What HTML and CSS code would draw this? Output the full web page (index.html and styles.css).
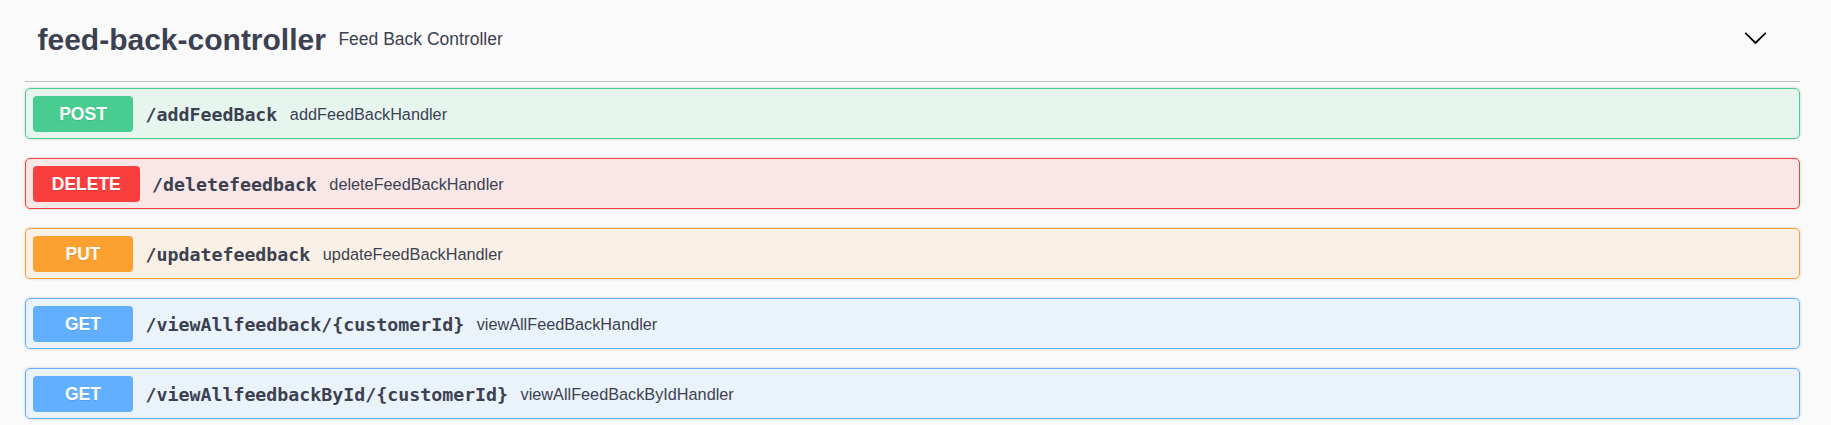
FILE: index.html
```html
<!DOCTYPE html>
<html lang="en">
<head>
<meta charset="utf-8">
<title>feed-back-controller</title>
<link rel="stylesheet" href="styles.css">
</head>
<body>
<div class="wrapper">
  <section class="tag-section">
    <div class="tag-header">
      <h3 class="tag-title">feed-back-controller</h3>
      <small class="tag-desc">Feed Back Controller</small>
      <svg class="chevron" width="25" height="25" viewBox="0 0 20 20" aria-hidden="true">
        <path d="M17.418 6.109c.272-.268.709-.268.979 0s.271.701 0 .969l-7.908 7.83c-.27.268-.707.268-.979 0l-7.908-7.83c-.27-.268-.27-.701 0-.969.271-.268.709-.268.979 0L10 13.25l7.418-7.141z"/>
      </svg>
    </div>
    <div class="op op-post">
      <span class="method">POST</span>
      <span class="path">/addFeedBack</span>
      <span class="desc">addFeedBackHandler</span>
    </div>
    <div class="op op-delete">
      <span class="method">DELETE</span>
      <span class="path">/deletefeedback</span>
      <span class="desc">deleteFeedBackHandler</span>
    </div>
    <div class="op op-put">
      <span class="method">PUT</span>
      <span class="path">/updatefeedback</span>
      <span class="desc">updateFeedBackHandler</span>
    </div>
    <div class="op op-get">
      <span class="method">GET</span>
      <span class="path">/viewAllfeedback/{customerId}</span>
      <span class="desc">viewAllFeedBackHandler</span>
    </div>
    <div class="op op-get">
      <span class="method">GET</span>
      <span class="path">/viewAllfeedbackById/{customerId}</span>
      <span class="desc">viewAllFeedBackByIdHandler</span>
    </div>
  </section>
</div>
</body>
</html>
```
FILE: styles.css
```css
html, body {
  margin: 0;
  padding: 0;
  background: #fafafa;
  color: #3b4151;
  font-family: "Liberation Sans", Arial, sans-serif;
}

.wrapper {
  padding: 0 31px 0 25px;
}

.tag-header {
  display: flex;
  align-items: center;
  box-sizing: border-box;
  height: 82px;
  padding: 0 32px 2px 12.5px;
  border-bottom: 1px solid rgba(59, 65, 81, 0.3);
  margin-bottom: 6px;
}

.tag-title {
  margin: 0;
  font-size: 30px;
  font-weight: 700;
  line-height: normal;
  color: #3b4151;
}

.tag-desc {
  flex: 1;
  padding: 0 12.5px;
  font-size: 17.5px;
  line-height: normal;
  color: #3b4151;
}

.chevron {
  fill: #000;
  margin-bottom: 4px;
}

.op {
  display: flex;
  align-items: center;
  height: 51px;
  box-sizing: border-box;
  padding: 7px 7px 6px;
  margin-bottom: 19px;
  border: 1px solid;
  border-radius: 5px;
  box-shadow: 0 0 3px rgba(0, 0, 0, 0.19);
}

.method {
  box-sizing: border-box;
  min-width: 100px;
  padding: 7.5px 18.75px;
  font-size: 17.5px;
  line-height: 21px;
  font-weight: 700;
  text-align: center;
  color: #fff;
  border-radius: 4px;
  text-shadow: 0 1px 0 rgba(0, 0, 0, 0.1);
}

.path {
  padding: 0 12.5px;
  font-family: "DejaVu Sans Mono", "Liberation Mono", monospace;
  font-size: 18.25px;
  font-weight: 700;
  color: #3b4151;
}

.desc {
  font-size: 16.25px;
  color: #3b4151;
}

.op-post { border-color: #49cc90; background: rgba(73, 204, 144, 0.1); }
.op-post .method { background: #49cc90; }

.op-delete { border-color: #f93e3e; background: rgba(249, 62, 62, 0.1); }
.op-delete .method { background: #f93e3e; }

.op-put { border-color: #fca130; background: rgba(252, 161, 48, 0.1); }
.op-put .method { background: #fca130; }

.op-get { border-color: #61affe; background: rgba(97, 175, 254, 0.1); }
.op-get .method { background: #61affe; }
```
